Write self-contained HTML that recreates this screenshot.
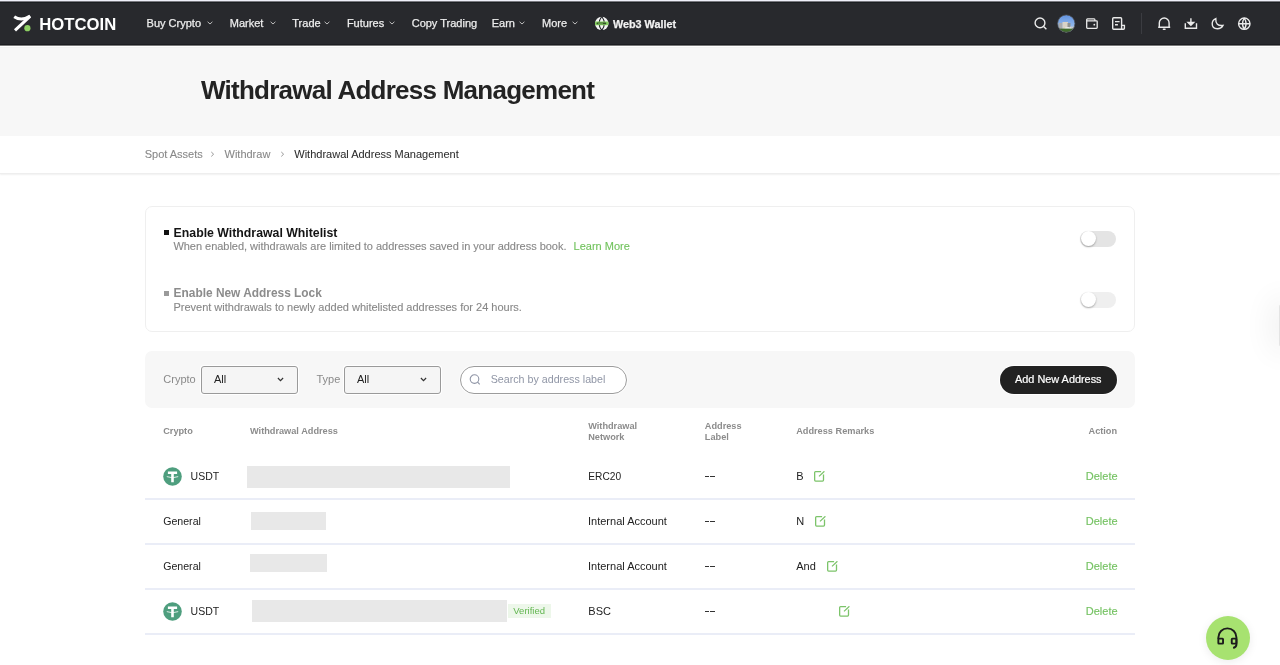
<!DOCTYPE html>
<html><head><meta charset="utf-8">
<style>
*{margin:0;padding:0;box-sizing:border-box}
html,body{width:1280px;height:665px;overflow:hidden;background:#fff;font-family:"Liberation Sans",sans-serif;position:relative}
.a{position:absolute}
.t{position:absolute;white-space:nowrap;line-height:1}
#top0{left:0;top:0;width:1280px;height:1px;background:#f0f0fa}
#top1{left:0;top:1px;width:1280px;height:1px;background:#7a7a80}
#hdr{left:0;top:2px;width:1280px;height:43px;background:#28292d;border-top:1px solid #1b1e21;border-bottom:1px solid #1c1d21}
#hb1{left:0;top:45px;width:1280px;height:1px;background:#7a7a7a}
#hb2{left:0;top:46px;width:1280px;height:1px;background:#fff}
#hero{left:0;top:47px;width:1280px;height:89px;background:#f7f7f7}
#hero0{left:0;top:47px;width:1280px;height:1px;background:#f3f3f3}
.nav{font-size:11px;color:#ededed;top:17.6px;-webkit-text-stroke:0.25px #ededed}
.chev{position:absolute;top:21px;width:6px;height:4px}
#crumb{left:0;top:136px;width:1280px;height:38px;background:#fff;box-shadow:0 1px 1.5px rgba(0,0,0,0.06);border-bottom:1px solid #eeeeee}
.bc{font-size:11px;color:#888;top:148.9px;-webkit-text-stroke:0.1px #888}
#card{left:145px;top:206px;width:990px;height:126px;border:1px solid #efefef;border-radius:7px;background:#fff}
.bul{position:absolute;width:5px;height:5px;background:#111}
.ct{font-size:12.3px;font-weight:bold;color:#141414}
.cd{font-size:11px;color:#888;-webkit-text-stroke:0.12px #888}
.tog{position:absolute;width:36px;height:16px;border-radius:8px;background:#e4e4e4}
.tog i{position:absolute;left:0.5px;top:0.5px;width:15px;height:15px;border-radius:50%;background:#fff;box-shadow:0 1px 2px rgba(0,0,0,0.3)}
#bar{left:145px;top:351px;width:990px;height:57px;background:#f7f7f7;border-radius:7px}
.lbl{font-size:11px;color:#8a8a8a;top:373.9px}
.sel{position:absolute;top:366px;width:97px;height:27.5px;border:1px solid #9a9a9a;border-radius:3px;background:#f5f5f5;box-shadow:0 0 0 1px #fff}
.sel span{position:absolute;left:12px;top:6.6px;font-size:11px;line-height:1;color:#222}
#srch{left:460px;top:366px;width:167px;height:27.5px;border:1px solid #9c9c9c;border-radius:14px;background:#fff;box-shadow:0 0 0 1px #fcfcfc}
#btn{left:1000px;top:366px;width:117px;height:27.5px;border-radius:14px;background:#222;box-shadow:0 0 0 1px #fff}
.th{font-size:9.2px;font-weight:bold;color:#8c8c8c}
.row{position:absolute;left:145px;width:990px;height:2px;background:#eaedf7}
.cell{font-size:11px;color:#222}
.del{font-size:11px;color:#75c263;-webkit-text-stroke:0.15px #75c263}
.ph{position:absolute;background:#e8e8e8}
</style></head><body><div id="root" style="position:absolute;left:0;top:0;width:1280px;height:665px;will-change:transform">
<div class="a" id="top0"></div><div class="a" id="top1"></div>
<div class="a" id="hdr"></div>
<div class="a" id="hb1"></div><div class="a" id="hb2"></div>
<div class="a" id="hero"></div><div class="a" id="hero0"></div>

<!-- logo -->
<svg class="a" style="left:0;top:0" width="40" height="45" viewBox="0 0 40 45">
<path d="M14.2,16.7 Q21.5,21.6 30.2,16" fill="none" stroke="#fff" stroke-width="3"/>
<path d="M30,16.4 L15,30.4" fill="none" stroke="#fff" stroke-width="3"/>
<circle cx="27.4" cy="28.2" r="3.1" fill="#8ed163"/>
</svg>
<div class="t" style="left:39.3px;top:17.1px;font-size:16.7px;font-weight:bold;color:#fff">HOTCOIN</div>

<!-- nav -->
<div class="t nav" style="left:146.6px">Buy Crypto</div>
<svg class="chev" style="left:207px" viewBox="0 0 6 4"><path d="M0.6,0.8 L3,3 L5.4,0.8" fill="none" stroke="#bdbdbd" stroke-width="1"/></svg>
<div class="t nav" style="left:229.8px">Market</div>
<svg class="chev" style="left:270px" viewBox="0 0 6 4"><path d="M0.6,0.8 L3,3 L5.4,0.8" fill="none" stroke="#bdbdbd" stroke-width="1"/></svg>
<div class="t nav" style="left:292.3px">Trade</div>
<svg class="chev" style="left:323.5px" viewBox="0 0 6 4"><path d="M0.6,0.8 L3,3 L5.4,0.8" fill="none" stroke="#bdbdbd" stroke-width="1"/></svg>
<div class="t nav" style="left:346.9px">Futures</div>
<svg class="chev" style="left:388.5px" viewBox="0 0 6 4"><path d="M0.6,0.8 L3,3 L5.4,0.8" fill="none" stroke="#bdbdbd" stroke-width="1"/></svg>
<div class="t nav" style="left:411.7px">Copy Trading</div>
<div class="t nav" style="left:491.7px">Earn</div>
<svg class="chev" style="left:519px" viewBox="0 0 6 4"><path d="M0.6,0.8 L3,3 L5.4,0.8" fill="none" stroke="#bdbdbd" stroke-width="1"/></svg>
<div class="t nav" style="left:542px">More</div>
<svg class="chev" style="left:571.5px" viewBox="0 0 6 4"><path d="M0.6,0.8 L3,3 L5.4,0.8" fill="none" stroke="#bdbdbd" stroke-width="1"/></svg>
<!-- web3 globe -->
<svg class="a" style="left:594px;top:16px" width="16" height="16" viewBox="0 0 16 16">
<circle cx="7.75" cy="7.4" r="6.7" fill="#f4f4f4"/>
<path d="M7.75,0.5 Q2.4,7.4 7.75,14.3 M7.75,0.5 Q13.1,7.4 7.75,14.3" fill="none" stroke="#1e2024" stroke-width="1.1"/>
<rect x="1" y="5.4" width="13.4" height="3.9" rx="0.8" fill="#86d160"/>
<rect x="2.6" y="6.5" width="9.6" height="1.8" rx="0.6" fill="#35502a"/>
<rect x="4" y="6.9" width="5" height="0.9" fill="#6aa84f"/>
</svg>
<div class="t nav" style="left:613px;font-weight:bold;font-size:10.8px;color:#f4f4f4;top:19.2px">Web3 Wallet</div>

<!-- right icons -->
<svg class="a" style="left:1030px;top:12px" width="230" height="24" viewBox="1030 12 230 24" fill="none" stroke="#eaeaea" stroke-width="1.4">
<circle cx="1040" cy="22.9" r="4.9"/>
<path d="M1043.6,26.5 L1046.4,29.2"/>
<path d="M1086.7,20.8 L1086.7,27.5 Q1086.7,28.3 1087.5,28.3 L1096.4,28.3 Q1097.2,28.3 1097.2,27.5 L1097.2,21.6 Q1097.2,20.8 1096.4,20.8 Z M1086.7,20.8 L1086.7,19.8 Q1086.7,18.95 1087.5,18.95 L1094.1,18.95 Q1094.9,18.95 1094.9,19.8 L1094.9,20.8" stroke-width="1.3"/><circle cx="1094.3" cy="24.7" r="0.9" fill="#eaeaea" stroke="none"/>
<path d="M1112.7,18.8 Q1112.7,17.8 1113.7,17.8 L1120.6,17.8 Q1121.6,17.8 1121.6,18.8 L1121.6,25.4 L1124.4,25.4 L1124.4,28.3 Q1124.4,29.3 1123.4,29.3 L1113.7,29.3 Q1112.7,29.3 1112.7,28.3 Z M1121.6,25.4 L1121.6,28.6"/>
<path d="M1115,21.6 L1119.6,21.6 M1115,24.8 L1117.9,24.8" stroke-width="1.4"/>
<path d="M1159.3,27 L1159.3,22.9 A4.9,4.9 0 0 1 1169.1,22.9 L1169.1,27 M1158.2,27.3 L1170.2,27.3"/>
<path d="M1163.4,29.2 L1165,29.2" stroke-width="1.5" stroke-linecap="round"/>
<path d="M1185.3,23.2 L1185.3,28.2 L1196.5,28.2 L1196.5,23.2 M1190.9,18.3 L1190.9,24.6"/>
<path d="M1188.1,22.4 L1190.9,25.2 L1193.7,22.4 Z" fill="#eaeaea"/>
<path d="M1215.8,18.6 Q1212.2,20.2 1212.2,23.8 Q1212.2,28.8 1217.4,28.8 Q1221.3,28.8 1223,25.4 Q1215.3,26.4 1215.8,18.6 Z"/>
<circle cx="1244.3" cy="23.7" r="5.7"/>
<path d="M1238.6,23.7 L1250,23.7 M1244.3,18 Q1240.8,23.7 1244.3,29.4 M1244.3,18 Q1247.8,23.7 1244.3,29.4"/>
</svg>
<svg class="a" style="left:1057px;top:14px" width="19" height="19" viewBox="0 0 19 19">
<defs><clipPath id="av"><circle cx="9.25" cy="9.55" r="8.65"/></clipPath><linearGradient id="sky" x1="0" y1="0" x2="0" y2="1"><stop offset="0" stop-color="#5d8fe0"/><stop offset="0.6" stop-color="#8fb6ea"/></linearGradient></defs>
<g clip-path="url(#av)">
<rect x="0" y="0" width="19" height="19" fill="url(#sky)"/>
<rect x="1.5" y="9" width="4" height="10" fill="#a9abae"/>
<rect x="5.5" y="8" width="5.5" height="11" fill="#d9d3c6"/>
<rect x="10.5" y="9" width="3" height="10" fill="#8f9291"/>
<rect x="13" y="12.5" width="6" height="7" fill="#c4c8cc"/>
<ellipse cx="11" cy="14.5" rx="3.5" ry="1.6" fill="#eeeeee"/>
<rect x="0" y="14.6" width="19" height="5" fill="#3f6c2b"/>
</g>
<circle cx="9.25" cy="9.55" r="8.65" fill="none" stroke="#55575c" stroke-width="0.7"/>
</svg>
<div class="a" style="left:1141px;top:13px;width:1px;height:20.5px;background:#3b3c41"></div>

<!-- hero -->
<div class="t" style="left:201px;top:76.5px;font-size:26px;font-weight:bold;color:#232323;letter-spacing:-0.75px">Withdrawal Address Management</div>

<!-- breadcrumb -->
<div class="a" id="crumb"></div>
<div class="t bc" style="left:144.7px">Spot Assets</div>
<svg class="a" style="left:210px;top:151px" width="6" height="7" viewBox="0 0 6 7"><path d="M1.3,1 L3.6,3.2 L1.3,5.4" fill="none" stroke="#8f8f8f" stroke-width="0.95"/></svg>
<div class="t bc" style="left:224.5px">Withdraw</div>
<svg class="a" style="left:280px;top:151px" width="6" height="7" viewBox="0 0 6 7"><path d="M1.3,1 L3.6,3.2 L1.3,5.4" fill="none" stroke="#8f8f8f" stroke-width="0.95"/></svg>
<div class="t bc" style="left:294.3px;color:#222">Withdrawal Address Management</div>

<!-- card -->
<div class="a" id="card"></div>
<div class="bul" style="left:164px;top:230px"></div>
<div class="t ct" style="left:173.6px;top:226.6px">Enable Withdrawal Whitelist</div>
<div class="t cd" style="left:173.4px;top:240.9px;letter-spacing:-0.025px">When enabled, withdrawals are limited to addresses saved in your address book.</div>
<div class="t cd" style="left:573.6px;top:240.9px;color:#72c35e;-webkit-text-stroke:0.12px #72c35e">Learn More</div>
<div class="tog" style="left:1080px;top:230.5px"><i></i></div>
<div class="bul" style="left:164px;top:291px;background:#9a9a9a"></div>
<div class="t ct" style="left:173.6px;top:287.8px;color:#8c8c8c;font-size:11.9px">Enable New Address Lock</div>
<div class="t cd" style="left:173.4px;top:301.5px">Prevent withdrawals to newly added whitelisted addresses for 24 hours.</div>
<div class="tog" style="left:1080px;top:291.5px;background:#efefef"><i></i></div>

<!-- toolbar -->
<div class="a" id="bar"></div>
<div class="t lbl" style="left:163.3px">Crypto</div>
<div class="sel" style="left:201px"><span>All</span></div>
<svg class="a" style="left:276.5px;top:377px" width="7" height="5" viewBox="0 0 7 5"><path d="M0.9,1 L3.5,3.6 L6.1,1" fill="none" stroke="#333" stroke-width="1.2"/></svg>
<div class="t lbl" style="left:316.5px">Type</div>
<div class="sel" style="left:344px"><span>All</span></div>
<svg class="a" style="left:419.5px;top:377px" width="7" height="5" viewBox="0 0 7 5"><path d="M0.9,1 L3.5,3.6 L6.1,1" fill="none" stroke="#333" stroke-width="1.2"/></svg>
<div class="a" id="srch"></div>
<svg class="a" style="left:468px;top:372px" width="14" height="14" viewBox="0 0 14 14" fill="none" stroke="#8e94a5" stroke-width="1.1"><circle cx="6.5" cy="7.1" r="4.3"/><path d="M9.6,10.2 L11.7,12.4"/></svg>
<div class="t lbl" style="left:490.7px;color:#9096a6;font-size:10.7px">Search by address label</div>
<div class="a" id="btn"></div>
<div class="t" style="left:1015px;top:373.8px;font-size:10.9px;color:#fff;-webkit-text-stroke:0.2px #fff">Add New Address</div>

<!-- table header -->
<div class="t th" style="left:163.2px;top:426.8px">Crypto</div>
<div class="t th" style="left:250px;top:426.8px">Withdrawal Address</div>
<div class="t th" style="left:588.2px;top:421.2px;line-height:10.6px">Withdrawal<br>Network</div>
<div class="t th" style="left:704.8px;top:421.2px;line-height:10.6px">Address<br>Label</div>
<div class="t th" style="left:796.2px;top:427.2px">Address Remarks</div>
<div class="t th" style="left:1088.5px;top:426.8px">Action</div>

<!-- rows -->
<div class="row" style="top:498px"></div>
<div class="row" style="top:543px"></div>
<div class="row" style="top:588px"></div>
<div class="row" style="top:633px"></div>

<!-- row1 -->
<svg class="a" style="left:162.9px;top:467px" width="19" height="19" viewBox="0 0 19 19">
<circle cx="9.5" cy="9.5" r="9.3" fill="#4e9e7e"/>
<path d="M4.9,4.6 L14.1,4.6 L14.1,7 L10.8,7 L10.8,15.2 L8.2,15.2 L8.2,7 L4.9,7 Z" fill="#fff"/>
<path d="M3.8,9.6 Q9.5,12 15.2,9.6" fill="none" stroke="#fff" stroke-width="0.8"/>
</svg>
<div class="t cell" style="left:190.6px;top:470.7px;font-size:10.5px">USDT</div>
<div class="ph" style="left:247px;top:466px;width:263px;height:22px"></div>
<div class="t cell" style="left:588.3px;top:472.1px;font-size:10.2px">ERC20</div>
<div class="a" style="left:705px;top:476px;width:4.2px;height:1.3px;background:#333"></div><div class="a" style="left:710.4px;top:476px;width:4.2px;height:1.3px;background:#333"></div>
<div class="t cell" style="left:796.2px;top:470.7px">B</div>
<div class="t del" style="left:1085.8px;top:470.7px">Delete</div>

<!-- row2 -->
<div class="t cell" style="left:163.2px;top:515.7px;font-size:10.6px">General</div>
<div class="ph" style="left:251px;top:512px;width:75px;height:17.5px"></div>
<div class="t cell" style="left:588px;top:515.7px">Internal Account</div>
<div class="a" style="left:705px;top:521px;width:4.2px;height:1.3px;background:#333"></div><div class="a" style="left:710.4px;top:521px;width:4.2px;height:1.3px;background:#333"></div>
<div class="t cell" style="left:796.2px;top:515.7px">N</div>
<div class="t del" style="left:1085.8px;top:515.7px">Delete</div>

<!-- row3 -->
<div class="t cell" style="left:163.2px;top:560.7px;font-size:10.6px">General</div>
<div class="ph" style="left:250px;top:554px;width:76.5px;height:18px"></div>
<div class="t cell" style="left:588px;top:560.7px">Internal Account</div>
<div class="a" style="left:705px;top:566px;width:4.2px;height:1.3px;background:#333"></div><div class="a" style="left:710.4px;top:566px;width:4.2px;height:1.3px;background:#333"></div>
<div class="t cell" style="left:796.2px;top:560.7px">And</div>
<div class="t del" style="left:1085.8px;top:560.7px">Delete</div>

<!-- row4 -->
<svg class="a" style="left:162.9px;top:602px" width="19" height="19" viewBox="0 0 19 19">
<circle cx="9.5" cy="9.5" r="9.3" fill="#4e9e7e"/>
<path d="M4.9,4.6 L14.1,4.6 L14.1,7 L10.8,7 L10.8,15.2 L8.2,15.2 L8.2,7 L4.9,7 Z" fill="#fff"/>
<path d="M3.8,9.6 Q9.5,12 15.2,9.6" fill="none" stroke="#fff" stroke-width="0.8"/>
</svg>
<div class="t cell" style="left:190.6px;top:605.7px;font-size:10.5px">USDT</div>
<div class="ph" style="left:251.5px;top:600px;width:255px;height:21.5px"></div>
<div class="a" style="left:508px;top:604.4px;width:43px;height:13.6px;background:#edf7ea"></div>
<div class="t" style="left:513.3px;top:606.3px;font-size:9.5px;color:#62b650">Verified</div>
<div class="t cell" style="left:588.3px;top:605.7px">BSC</div>
<div class="a" style="left:705px;top:611px;width:4.2px;height:1.3px;background:#333"></div><div class="a" style="left:710.4px;top:611px;width:4.2px;height:1.3px;background:#333"></div>
<div class="t del" style="left:1085.8px;top:605.7px">Delete</div>

<!-- edit icons -->
<svg class="a" style="left:813.9px;top:471.1px" width="12" height="12" viewBox="0 0 12 12" fill="none" stroke="#7cc46a" stroke-width="1.3"><path d="M7.1,0.65 L1.6,0.65 Q0.65,0.65 0.65,1.6 L0.65,9.1 Q0.65,10.05 1.6,10.05 L8.55,10.05 Q9.5,10.05 9.5,9.1 L9.5,3.4 M5.0,5.4 L10.4,0.3"/></svg>
<svg class="a" style="left:814.8px;top:516.1px" width="12" height="12" viewBox="0 0 12 12" fill="none" stroke="#7cc46a" stroke-width="1.3"><path d="M7.1,0.65 L1.6,0.65 Q0.65,0.65 0.65,1.6 L0.65,9.1 Q0.65,10.05 1.6,10.05 L8.55,10.05 Q9.5,10.05 9.5,9.1 L9.5,3.4 M5.0,5.4 L10.4,0.3"/></svg>
<svg class="a" style="left:826.5px;top:561.1px" width="12" height="12" viewBox="0 0 12 12" fill="none" stroke="#7cc46a" stroke-width="1.3"><path d="M7.1,0.65 L1.6,0.65 Q0.65,0.65 0.65,1.6 L0.65,9.1 Q0.65,10.05 1.6,10.05 L8.55,10.05 Q9.5,10.05 9.5,9.1 L9.5,3.4 M5.0,5.4 L10.4,0.3"/></svg>
<svg class="a" style="left:838.9px;top:606.1px" width="12" height="12" viewBox="0 0 12 12" fill="none" stroke="#7cc46a" stroke-width="1.3"><path d="M7.1,0.65 L1.6,0.65 Q0.65,0.65 0.65,1.6 L0.65,9.1 Q0.65,10.05 1.6,10.05 L8.55,10.05 Q9.5,10.05 9.5,9.1 L9.5,3.4 M5.0,5.4 L10.4,0.3"/></svg>

<!-- right edge tab -->
<div class="a" style="left:1279px;top:304px;width:8px;height:43px;background:#e4e4e4;border-radius:3px;box-shadow:0 0 30px 6px rgba(0,0,0,0.075)"></div>

<!-- support -->
<div class="a" style="left:1205.5px;top:615.5px;width:44px;height:44px;border-radius:50%;background:#a7e270;box-shadow:0 2px 10px rgba(0,0,0,0.08)"></div>
<svg class="a" style="left:1214px;top:624px" width="28" height="28" viewBox="0 0 28 28" fill="none" stroke="#1c1c1c" stroke-width="1.9">
<path d="M4.35,15 L4.35,13.4 A9.05,9.05 0 0 1 22.45,13.4 L22.45,20.5 Q22.45,22.9 19.2,24"/>
<rect x="4.35" y="14.6" width="4.7" height="5" rx="0.6"/>
<rect x="17.75" y="14.6" width="4.7" height="5" rx="0.6"/>
</svg>
</div></body></html>
